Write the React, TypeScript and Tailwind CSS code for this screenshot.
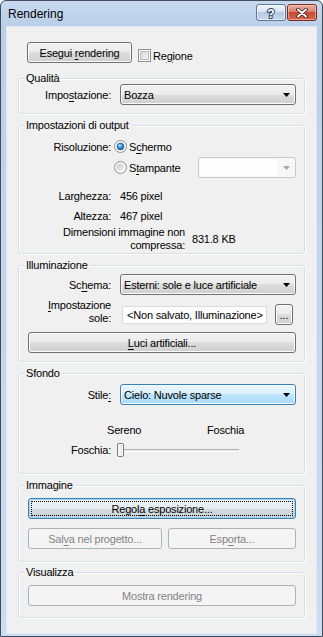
import React from "react";

const FONT = "font-['Liberation_Sans',Arial,sans-serif]";

function U({ children }: { children: React.ReactNode }) {
  return <span className="underline underline-offset-[2px]">{children}</span>;
}

type BtnProps = {
  children: React.ReactNode;
  className?: string;
  variant?: "normal" | "focus" | "disabled";
};

function Btn({ children, className = "", variant = "normal" }: BtnProps) {
  if (variant === "disabled") {
    return (
      <div
        className={`flex h-[21px] items-center justify-center rounded-[3px] border border-[#adb2b5] bg-[#f4f4f4] text-[#838383] ${className}`}
      >
        <span>{children}</span>
      </div>
    );
  }
  if (variant === "focus") {
    return (
      <div
        className={`flex h-[21px] items-stretch rounded-[3px] border border-[#3c7fb1] bg-[linear-gradient(to_bottom,#eef3f6_0%,#e6ecf0_50%,#d6dde2_50%,#c9d1d7_100%)] p-[2px] shadow-[inset_0_0_0_1px_#a6d4f0] ${className}`}
      >
        <span className="flex w-full items-center justify-center border border-dotted border-black">
          <span>{children}</span>
        </span>
      </div>
    );
  }
  return (
    <div
      className={`flex h-[21px] items-center justify-center rounded-[3px] border border-[#707070] bg-[linear-gradient(to_bottom,#f2f2f2_0%,#ebebeb_50%,#dddddd_50%,#cfcfcf_100%)] shadow-[inset_0_0_0_1px_#fcfcfc] ${className}`}
    >
      <span>{children}</span>
    </div>
  );
}

function Arrow({ color = "#000" }: { color?: string }) {
  return (
    <svg width="7" height="4" viewBox="0 0 7 4" className="shrink-0">
      <path d="M0 0H7L3.5 4Z" fill={color} />
    </svg>
  );
}

function Select({ value, focus = false }: { value: string; focus?: boolean }) {
  return (
    <div
      className={`flex h-[21px] items-center rounded-[3px] border pl-[3px] pr-[5px] ${
        focus
          ? "border-[#3c7fb1] bg-[linear-gradient(to_bottom,#eaf6fd_0%,#d9f0fc_50%,#bee6fd_50%,#a7d9f5_100%)] shadow-[inset_0_0_0_1px_#f3fafe]"
          : "border-[#707070] bg-[linear-gradient(to_bottom,#f2f2f2_0%,#ebebeb_50%,#dddddd_50%,#cfcfcf_100%)] shadow-[inset_0_0_0_1px_#fcfcfc]"
      }`}
    >
      <span className="flex-1 truncate">{value}</span>
      <Arrow />
    </div>
  );
}

function DisabledSelect({ className = "" }: { className?: string }) {
  return (
    <div
      className={`flex h-[21px] items-stretch rounded-[2px] border border-[#c7c9cc] bg-[#f7f7f7] ${className}`}
    >
      <div className="my-[1px] ml-[1px] flex-1 bg-[#fdfdfd]" />
      <div className="flex w-[18px] items-center justify-center">
        <Arrow color="#a7a7a7" />
      </div>
    </div>
  );
}

function Radio({ checked = false, className = "" }: { checked?: boolean; className?: string }) {
  return (
    <svg width="13" height="13" viewBox="0 0 13 13" className={`shrink-0 ${className}`}>
      <defs>
        <linearGradient id="radioBg" x1="0" y1="0" x2="1" y2="1">
          <stop offset="0" stopColor="#c6c8cc" />
          <stop offset="1" stopColor="#f6f6f6" />
        </linearGradient>
        <radialGradient id="radioDot" cx="0.4" cy="0.35" r="0.75">
          <stop offset="0" stopColor="#c8f0ff" />
          <stop offset="0.35" stopColor="#3fa2e6" />
          <stop offset="1" stopColor="#0d4f8f" />
        </radialGradient>
      </defs>
      <circle cx="6.5" cy="6.5" r="6" fill="#f4f4f4" stroke="#8e8f8f" />
      <circle cx="6.5" cy="6.5" r="4.5" fill="url(#radioBg)" stroke="#ffffff" strokeWidth="0.8" />
      {checked && <circle cx="6.5" cy="6.5" r="3.4" fill="url(#radioDot)" stroke="#1c5180" strokeWidth="0.6" />}
    </svg>
  );
}

function Checkbox() {
  return (
    <div className="flex h-[13px] w-[13px] shrink-0 items-center justify-center border border-[#8e8f8f] bg-white">
      <div className="h-[9px] w-[9px] border border-[#b9bcc1] bg-[linear-gradient(135deg,#d3d6da_0%,#f3f3f3_100%)]" />
    </div>
  );
}

function Group({
  title,
  className = "",
  children,
}: {
  title: string;
  className?: string;
  children: React.ReactNode;
}) {
  return (
    <fieldset
      className={`rounded-[3px] border border-[#d5dfe5] shadow-[inset_1px_1px_0_#ffffff,1px_1px_0_#ffffff] ${className}`}
    >
      <legend className="ml-[5px] bg-[#f0f0f0] px-[2px] leading-[12px]">{title}</legend>
      {children}
    </fieldset>
  );
}

function Slider({ className = "" }: { className?: string }) {
  return (
    <div className={`flex h-[14px] w-[122px] items-center ${className}`}>
      <div className="h-[14px] w-[7px] shrink-0 rounded-[2px] border border-[#7a7a7a] bg-[linear-gradient(to_right,#f5f5f5_0%,#e4e4e4_100%)] shadow-[inset_0_0_0_1px_#ffffff]" />
      <div className="h-[3px] flex-1 border-b border-t border-[#b3b3b3] border-b-white bg-[#e7e7e7]" />
    </div>
  );
}

export default function App() {
  return (
    <div
      className={`flex h-[637px] w-[323px] flex-col overflow-hidden rounded-t-[6px] border border-[#404c5c] bg-[linear-gradient(to_bottom,#c6d9ef_0px,#b9cfe8_26px,#bfd2ea_120px,#cddcee_100%)] ${FONT}`}
    >
      {/* Title bar */}
      <div className="flex h-[26px] shrink-0 pl-[7px] pr-[5px]">
        <div className="flex flex-1 items-center text-[12px] text-black">Rendering</div>
        <div className="mt-[3px] flex h-[17px] gap-[1px]">
          <div className="flex w-[30px] items-center justify-center rounded-[3px] border border-[#5f7697] bg-[linear-gradient(to_bottom,#eef4fb_0%,#d8e4f2_45%,#b4cae4_50%,#c6d8ee_100%)] shadow-[inset_0_0_0_1px_rgba(255,255,255,0.55)]">
            <svg width="12" height="14" viewBox="0 0 12 14">
              <text
                x="6"
                y="11.5"
                textAnchor="middle"
                fontSize="12"
                fontWeight="bold"
                fontFamily="Liberation Sans, Arial, sans-serif"
                fill="#ffffff"
                stroke="#33465f"
                strokeWidth="2"
                paintOrder="stroke"
              >
                ?
              </text>
            </svg>
          </div>
          <div className="flex w-[30px] items-center justify-center rounded-[3px] border border-[#7d2a1e] bg-[linear-gradient(to_bottom,#eab1a4_0%,#d9806e_45%,#c64a33_50%,#d5674f_100%)] shadow-[inset_0_0_0_1px_rgba(255,220,210,0.5)]">
            <svg width="12" height="10" viewBox="0 0 12 10">
              <path d="M2 1.5L10 8.5M10 1.5L2 8.5" stroke="#3a1a14" strokeWidth="3.6" strokeLinecap="round" />
              <path d="M2 1.5L10 8.5M10 1.5L2 8.5" stroke="#ffffff" strokeWidth="2" strokeLinecap="round" />
            </svg>
          </div>
        </div>
      </div>

      {/* Client */}
      <div className="mx-[6px] mb-[3px] flex flex-1 flex-col bg-[#f0f0f0] px-[11px] pt-[15px] text-[11px] leading-[14px] tracking-[-0.2px] text-black shadow-[0_0_0_1px_#dfe8f3]">
        <div className="flex h-[21px] items-start">
          <Btn className="ml-[9px] w-[105px]">
            Esegui <U>r</U>endering
          </Btn>
          <div className="ml-[6px] mt-[7px] flex h-[13px] items-center">
            <Checkbox />
            <span className="ml-[2px]">
              Re<U>g</U>ione
            </span>
          </div>
        </div>

        <Group title="Qualità" className="mt-[9px]">
          <div className="grid grid-cols-[92px_1fr] items-center gap-x-[9px] pb-[8px] pr-[8px]">
            <div className="text-right">
              Impo<U>s</U>tazione:
            </div>
            <Select value="Bozza" />
          </div>
        </Group>

        <Group title="Impostazioni di output" className="mt-[5px]">
          <div className="flex flex-col pb-[1px] pr-[8px]">
            <div className="mt-[5px] flex h-[21px] items-center">
              <div className="w-[92px] text-right">Risoluzione:</div>
              <Radio checked className="ml-[3px]" />
              <span className="ml-[2px]">
                S<U>c</U>hermo
              </span>
            </div>
            <div className="flex h-[21px] items-center">
              <div className="w-[92px]" />
              <Radio className="ml-[3px]" />
              <span className="ml-[2px]">
                S<U>t</U>ampante
              </span>
              <DisabledSelect className="ml-auto w-[98px]" />
            </div>
            <div className="mt-[11px] grid grid-cols-[92px_1fr] gap-x-[9px] leading-[14px]">
              <div className="text-right">Larghezza:</div>
              <div>456 pixel</div>
            </div>
            <div className="mt-[6px] grid grid-cols-[92px_1fr] gap-x-[9px] leading-[14px]">
              <div className="text-right">Altezza:</div>
              <div>467 pixel</div>
            </div>
            <div className="mt-[3px] flex items-center leading-[13px]">
              <div className="w-[166px] text-right">
                Dimensioni immagine non
                <br />
                compressa:
              </div>
              <div className="ml-[7px]">831.8 KB</div>
            </div>
          </div>
        </Group>

        <Group title="Illuminazione" className="mt-[5px]">
          <div className="flex flex-col pb-[8px] pr-[8px]">
            <div className="mt-[3px] grid grid-cols-[92px_1fr] items-center gap-x-[9px]">
              <div className="text-right">
                Sc<U>h</U>ema:
              </div>
              <Select value="Esterni: sole e luce artificiale" />
            </div>
            <div className="mt-[4px] flex items-end">
              <div className="w-[92px] text-right leading-[13px]">
                <U>I</U>mpostazione
                <br />
                sole:
              </div>
              <div className="mb-[1px] ml-[11px] flex h-[18px] w-[145px] items-center overflow-hidden whitespace-nowrap border border-[#d9dce1] bg-white pl-[4px]">
                &lt;Non salvato, Illuminazione&gt;
              </div>
              <Btn className="ml-[8px] h-[20px] w-[18px]">...</Btn>
            </div>
            <Btn className="ml-[9px] mt-[7px]">
              <U>L</U>uci artificiali...
            </Btn>
          </div>
        </Group>

        <Group title="Sfondo" className="mt-[5px]">
          <div className="flex flex-col pb-[16px] pr-[8px]">
            <div className="mt-[5px] grid grid-cols-[92px_1fr] items-center gap-x-[9px]">
              <div className="text-right">
                Stile<U>:</U>
              </div>
              <Select focus value="Cielo: Nuvole sparse" />
            </div>
            <div className="mt-[18px] flex leading-[14px]">
              <span className="ml-[88px] w-[100px]">Sereno</span>
              <span>Foschia</span>
            </div>
            <div className="mt-[6px] flex items-center leading-[14px]">
              <div className="w-[92px] text-right">Foschia:</div>
              <Slider className="ml-[6px]" />
            </div>
          </div>
        </Group>

        <Group title="Immagine" className="mt-[5px]">
          <div className="flex flex-col pb-[12px] pl-[9px] pr-[8px]">
            <Btn variant="focus" className="mt-[7px]">
              Regol<U>a</U> esposizione...
            </Btn>
            <div className="mt-[9px] flex gap-[6px]">
              <Btn variant="disabled" className="w-[134px]">
                Sal<U>v</U>a nel progetto...
              </Btn>
              <Btn variant="disabled" className="flex-1">
                Esp<U>o</U>rta...
              </Btn>
            </div>
          </div>
        </Group>

        <Group title="Visualizza" className="mt-[4px]">
          <div className="flex flex-col pb-[11px] pl-[9px] pr-[8px]">
            <Btn variant="disabled" className="mt-[7px]">
              Mostra rendering
            </Btn>
          </div>
        </Group>
      </div>
    </div>
  );
}
